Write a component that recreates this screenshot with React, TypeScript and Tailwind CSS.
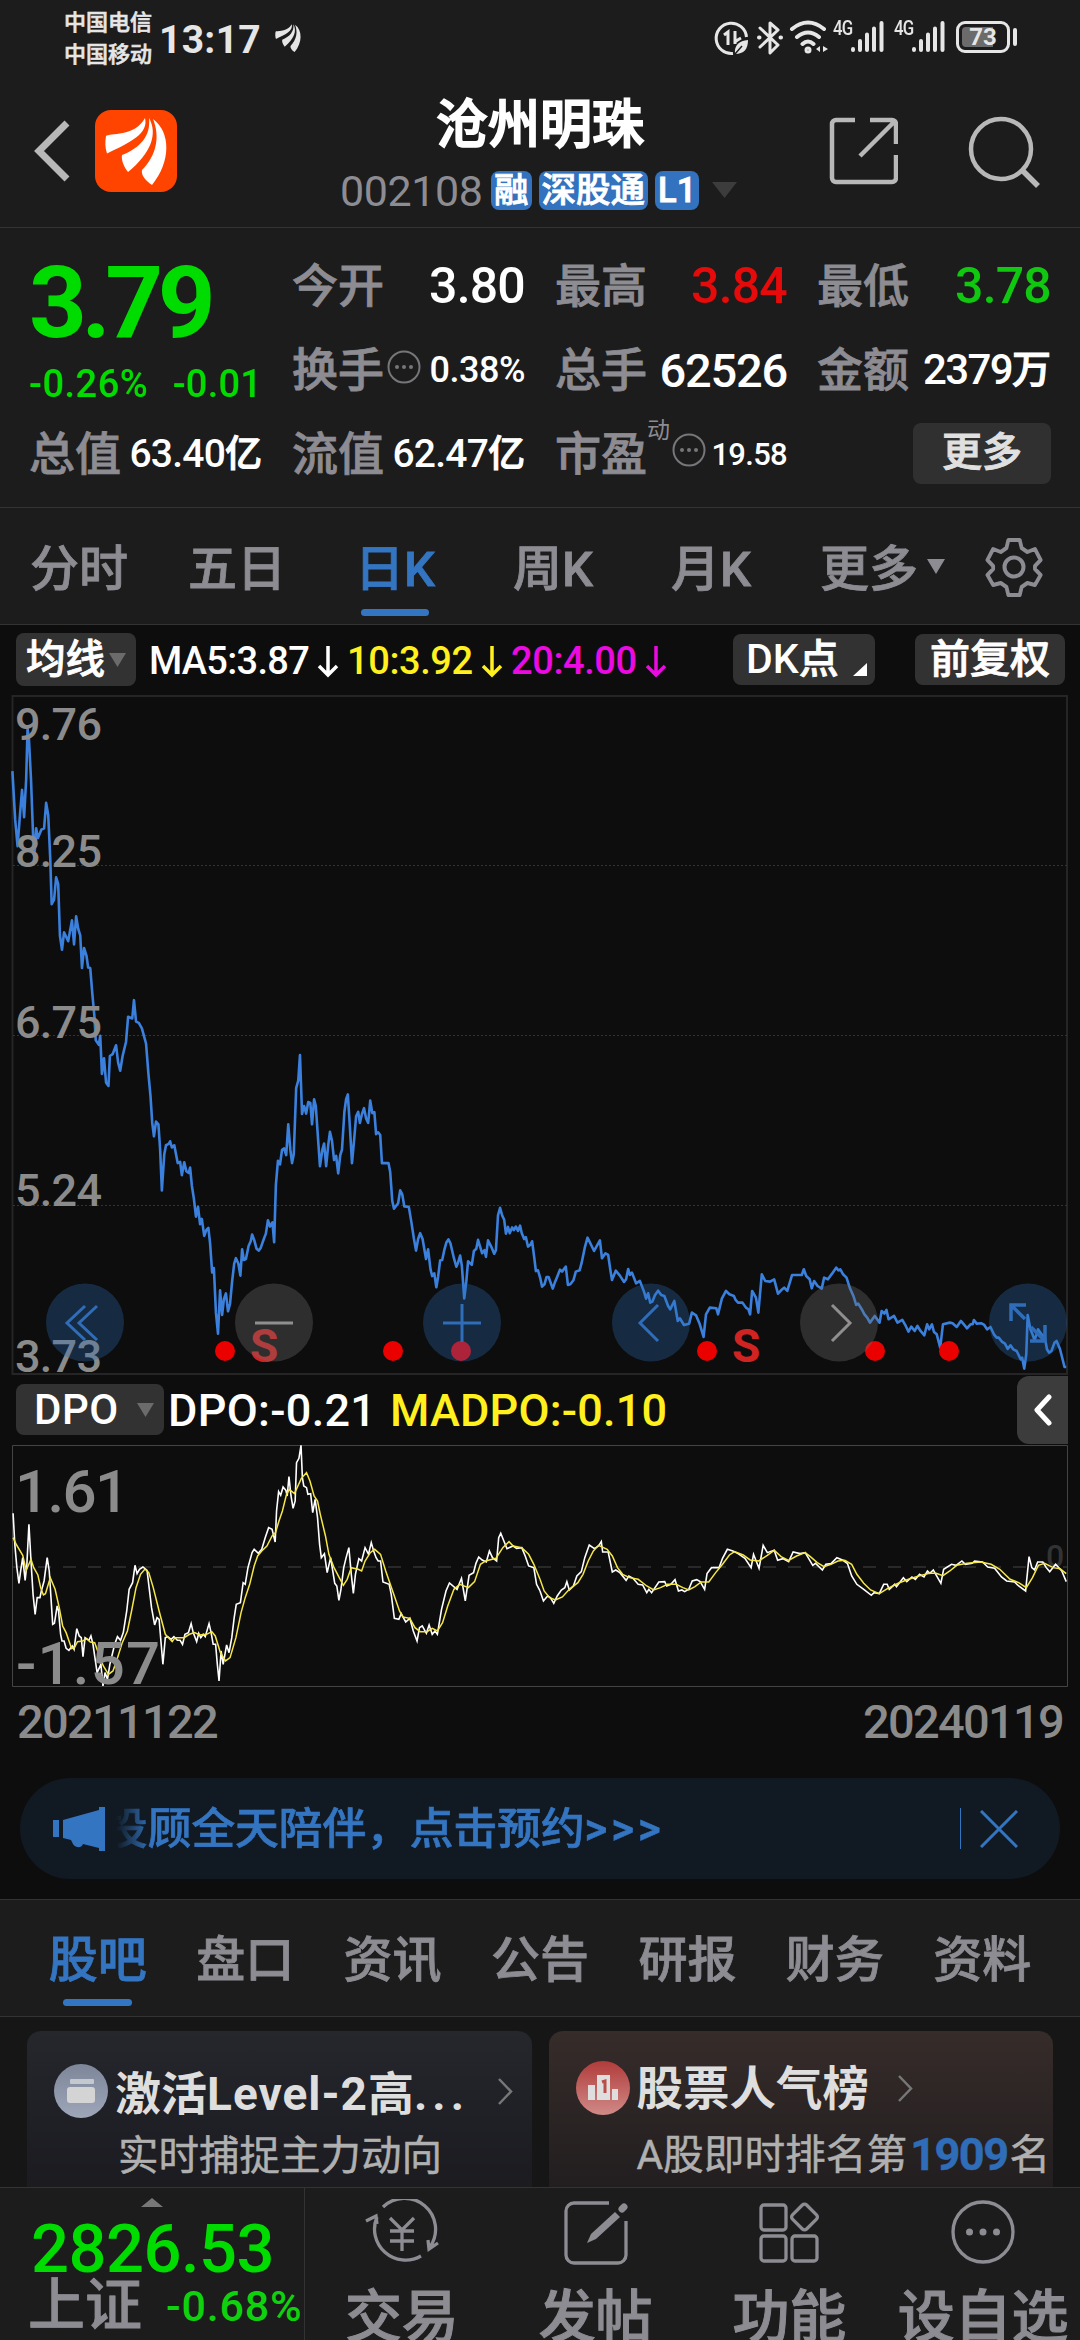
import { ReactNode } from 'react';

const PRICE_LEFT =
  '36,202 44,310 51,370 58,300 64,244 70,305 76,220 80,107 84,130 90,220 96,345 101,380 105,330 110,352 120,333 128,330 134,273 140,300 146,400 150,500 157,490 163,440 169,455 174,570 180,602 186,563 198,583 209,536 215,590 221,527 227,555 233,570 238,643 244,598 251,615 256,642 262,643 268,700 274,750 278,805 287,815 291,795 296,880 302,845 308,900 315,907 319,840 327,836 337,816 343,855 349,873 356,840 366,808 372,752 384,756 389,715 395,763 403,766 412,778 424,812 431,880 437,930 442,990 447,1020 453,987 460,993 465,1050 470,1141 477,1060 482,1040 490,1037 494,1031 499,1045 506,1040 516,1080 523,1077 528,1107 535,1078 541,1098 548,1102 552,1090 557,1130 563,1160 569,1200 575,1178 581,1217 586,1205 593,1243 599,1230 605,1225 610,1260 616,1325 621,1315 627,1415 633,1462 639,1365 645,1420 650,1385 656,1372 662,1412 668,1395 674,1345 680,1305 685,1293 692,1305 698,1332 703,1273 708,1297 714,1295 722,1265 728,1255 732,1240 738,1252 745,1272 751,1276 757,1270 766,1250 772,1238 778,1208 784,1222 791,1213 796,1257 801,1130 807,1075 813,1083 819,1050 825,1047 831,1062 837,993 843,1050 848,1080 853,1060 860,912 866,895 871,838 877,970 883,952 889,969 895,943 901,945 906,993 912,937 917,952 923,1020 929,1087 936,1050 941,1036 947,1087 953,1040 958,1010 964,1030 970,1073 976,1064 982,1103 988,1062 993,1050 1000,965 1005,937 1010,926 1016,1000 1022,1080 1028,1030 1034,975 1040,965 1045,990 1051,970 1057,957 1063,980 1069,990 1075,940 1081,968 1087,966 1092,1015 1098,1011 1104,1017 1109,1080 1128,1080 1133,1100 1139,1165 1144,1182 1156,1170 1162,1141 1168,1150 1174,1177 1187,1178 1194,1210 1202,1250 1208,1276 1214,1250 1220,1237 1227,1250 1237,1295 1243,1273 1250,1318 1255,1333 1261,1327 1267,1358 1272,1335 1278,1298 1284,1297 1290,1275 1296,1258 1302,1251 1308,1260 1318,1293 1325,1312 1330,1303 1336,1287 1341,1310 1348,1383 1354,1345 1359,1300 1370,1308 1376,1277 1383,1272 1388,1252 1400,1282 1407,1275 1411,1290 1417,1253 1428,1270 1435,1283 1440,1275 1446,1197 1452,1180 1458,1197 1464,1207 1469,1238 1475,1223 1480,1237 1487,1224 1492,1230 1498,1222 1504,1232 1510,1220 1515,1237 1522,1250 1527,1246 1533,1267 1540,1263 1545,1255 1551,1290 1556,1322 1562,1320 1568,1336';

const PRICE_RIGHT =
  '0,828 6,857 13,850 19,828 25,828 37,863 44,842 50,827 58,806 64,812 75,797 81,852 88,850 97,838 104,812 115,808 121,785 130,740 138,710 150,735 157,750 174,718 180,772 190,757 198,762 204,805 209,837 220,809 232,824 244,843 250,835 256,804 261,822 267,815 279,847 290,840 302,872 308,893 314,877 320,905 326,902 334,882 343,869 352,882 361,885 372,915 378,925 390,900 400,960 406,952 418,972 433,968 441,935 453,943 464,970 475,1008 482,940 493,920 512,922 517,940 528,893 540,870 550,880 563,885 568,897 575,905 588,905 598,920 605,925 610,940 616,870 627,890 634,935 644,820 654,840 668,842 680,835 691,878 700,868 709,860 718,870 732,822 760,822 766,805 773,825 783,835 789,862 796,840 806,855 818,863 825,830 836,835 848,818 860,800 866,808 872,805 880,820 890,830 900,862 910,885 918,912 924,908 936,928 942,940 950,950 958,965 972,945 986,965 992,930 1000,938 1006,927 1012,955 1028,945 1038,965 1052,957 1062,975 1070,992 1078,977 1088,990 1096,975 1105,990 1116,1003 1124,970 1130,985 1138,970 1144,993 1152,1000 1162,1040 1170,970 1190,965 1198,967 1210,978 1222,960 1232,972 1240,982 1250,970 1256,970 1260,957 1268,968 1282,967 1290,972 1298,985 1308,978 1318,1000 1326,1010 1332,1010 1342,1023 1350,1028 1358,1044 1366,1033 1374,1045 1384,1050 1396,1075 1400,1070 1406,1103 1412,1060 1416,942 1424,985 1430,1000 1436,1018 1446,985 1456,1000 1466,1010 1472,1045 1478,1055 1485,1050 1494,1025 1500,1020 1510,1045 1523,1098 1528,1098';

const DPO_LEFT =
  '38,427 43,520 49,590 55,637 60,600 66,560 73,628 78,580 84,460 90,570 96,670 102,730 108,680 116,680 120,660 128,630 137,560 143,600 148,680 153,760 158,757 166,705 170,720 176,790 180,810 186,810 192,832 200,838 210,825 215,835 223,773 230,795 236,800 241,857 247,800 258,808 264,795 270,820 282,905 293,880 299,945 305,905 312,925 319,880 326,850 333,820 341,797 350,808 358,785 368,720 375,655 385,635 392,583 398,608 405,595 415,588 427,598 433,650 440,710 449,762 456,740 462,745 468,820 473,880 480,800 487,797 497,805 505,797 515,808 523,808 530,820 537,790 547,785 555,758 561,785 571,812 577,787 583,800 590,790 596,797 607,758 613,785 619,820 626,820 631,880 636,930 642,840 648,880 658,822 665,845 673,800 680,740 686,700 698,695 706,635 712,640 720,590 732,545 738,535 750,547 760,535 770,500 780,470 790,475 799,513 803,420 809,362 815,373 822,348 830,358 834,375 839,317 845,375 851,412 857,390 861,275 868,262 874,223 878,320 882,345 890,350 894,370 902,368 908,425 915,385 922,440 928,520 933,560 942,548 950,605 960,560 972,637 978,645 984,688 990,655 998,590 1005,560 1013,530 1020,610 1026,667 1032,610 1042,563 1050,570 1060,530 1070,550 1078,515 1085,540 1092,560 1098,570 1105,570 1112,633 1130,640 1136,670 1145,742 1158,745 1165,728 1178,753 1190,742 1200,780 1211,810 1218,770 1226,765 1238,787 1246,762 1255,790 1263,780 1270,790 1282,715 1295,660 1305,636 1327,655 1340,622 1351,690 1362,613 1375,605 1382,577 1390,558 1400,567 1412,573 1421,540 1430,560 1442,570 1448,500 1454,487 1463,510 1472,533 1490,525 1500,532 1515,530 1525,555 1535,585 1550,590 1558,640 1568,660';

const DPO_RIGHT =
  '0,660 10,690 22,675 30,680 40,697 50,675 62,657 72,650 78,632 85,657 97,645 107,615 120,602 130,560 143,522 158,533 170,525 178,512 182,543 198,543 210,603 220,597 232,605 250,628 258,615 270,622 285,640 298,642 310,665 316,655 324,665 345,633 362,632 368,645 380,640 392,626 402,660 412,657 420,662 432,655 442,630 455,626 465,632 478,655 485,608 498,590 520,590 530,562 544,535 560,540 575,548 595,562 613,590 620,550 636,592 648,523 660,545 680,538 690,568 705,563 722,572 735,543 755,548 770,545 792,583 800,577 820,597 830,580 845,578 862,560 880,568 893,578 905,615 920,640 940,655 962,673 970,665 985,668 998,640 1008,640 1014,655 1030,640 1035,647 1055,620 1065,632 1080,618 1090,625 1102,610 1115,618 1125,600 1132,607 1142,597 1150,612 1164,637 1172,595 1195,580 1208,583 1225,570 1235,580 1255,577 1262,570 1285,573 1300,588 1320,592 1340,618 1355,630 1378,633 1390,645 1410,660 1420,557 1428,590 1436,597 1445,573 1460,573 1470,590 1480,602 1497,580 1515,600 1528,632';

const MADPO_LEFT =
  '38,500 48,522 66,553 76,598 90,565 98,590 110,612 118,650 126,672 132,668 146,620 160,655 172,710 182,765 192,785 208,833 216,830 225,812 240,810 252,803 262,813 275,815 287,850 300,885 315,910 328,900 340,865 355,815 370,780 382,720 395,650 408,610 421,594 432,605 445,650 462,720 480,790 500,812 508,800 535,800 550,790 565,785 580,792 600,790 615,782 625,795 640,845 655,870 668,860 685,800 700,725 712,680 725,640 738,585 748,555 760,540 775,525 790,495 800,485 810,450 820,420 832,370 840,355 855,368 875,322 890,305 900,330 912,375 922,390 930,430 945,495 955,550 970,590 985,620 997,643 1008,625 1020,590 1040,595 1050,600 1060,570 1075,545 1088,535 1105,550 1120,600 1140,660 1160,720 1170,738 1190,742 1205,770 1220,782 1240,782 1255,772 1270,780 1285,755 1300,705 1318,655 1335,640 1360,650 1378,632 1395,580 1410,570 1440,562 1460,530 1478,512 1490,525 1515,530 1535,550 1550,580 1568,625';

const MADPO_RIGHT =
  '0,625 12,660 28,680 45,687 65,678 85,655 110,635 125,610 140,570 155,540 170,523 195,535 210,555 225,590 240,610 260,620 285,625 310,645 330,657 350,650 370,640 395,640 415,650 432,657 450,647 468,633 490,633 510,605 530,580 550,552 565,542 590,552 610,567 635,570 660,553 680,538 700,557 722,568 745,555 770,545 785,557 805,575 825,587 845,580 865,570 885,568 905,580 920,610 940,637 960,657 985,668 1010,652 1040,637 1070,625 1100,615 1130,607 1150,607 1170,614 1190,600 1210,583 1240,577 1280,573 1310,580 1335,595 1365,625 1390,635 1412,650 1430,620 1447,583 1465,577 1490,590 1510,593 1528,608';

const priceLabels = [
  { text: '9.76', y: 739 },
  { text: '8.25', y: 866 },
  { text: '6.75', y: 1037 },
  { text: '5.24', y: 1205 },
  { text: '3.73', y: 1371 },
];

const periods = ['分时', '五日', '日K', '周K', '月K'];
const sections = ['股吧', '盘口', '资讯', '公告', '研报', '财务', '资料'];

const Leaf = ({ className }: { className: string }) => (
  <svg className={className} viewBox="0 0 82 82" fill="currentColor">
    <path d="M11 26C14 23 40 27 50 8C54 24 34 33 12 43.500C10 38 10 32 11 26Z" />
    <path d="M27 45C45 38 56 26 54 8C63 24 56 43 33 62C29 57 26 50 27 45Z" />
    <path d="M47 60C62 45 65 26 58 9C76 22 76 52 57 75C50 70 46 65 47 60Z" />
  </svg>
);

const Signal = () => (
  <div className="flex items-start">
    <span className="text-[21px] leading-[15px] font-medium tracking-[-1px] mt-px w-[18px] scale-x-80 origin-left">4G</span>
    <svg className="w-[34px] h-[33px] -ml-px" viewBox="0 0 34 33" stroke="currentColor" strokeWidth="4" strokeLinecap="round">
      <path d="M3 30v-1M10 30v-9M17 30V14.500M24 30V8.500M31.500 30V3" />
    </svg>
  </div>
);

const StatusBar = () => (
  <div className="h-[75px] flex items-start justify-between pl-16 pr-[63px] text-[#e6e6e6]">
    <div className="flex items-center h-[76px]">
      <div className="text-[22px] leading-8 font-medium w-[91px] mt-0.5 [-webkit-text-stroke:0.6px_currentColor]">
        <div>中国电信</div>
        <div>中国移动</div>
      </div>
      <span className="text-[39px] leading-none font-bold w-[110px] mt-1 ml-1 tracking-[0.3px]">13:17</span>
      <Leaf className="w-[34px] h-[34px] ml-0.5" />
    </div>
    <div className="flex items-start pt-5">
      <svg className="w-9 h-9 mr-[7px]" viewBox="0 0 36 36" fill="none" stroke="currentColor" strokeWidth="3">
        <path d="M19 33.500A15.200 15.200 0 1 1 32.500 17" />
        <path d="M10 15l4-3v13M21 11v13M21 22c2-2 4-3 6-4" />
        <path d="M21 34c-1-9 4-13 13-14c0 9-4 14-13 14Z" fill="currentColor" stroke="none" />
        <path d="M21 34l7-8" stroke="#1c1c1c" strokeWidth="1.500" />
      </svg>
      <svg className="w-[26px] h-9 mr-1.5" viewBox="0 0 26 36" fill="none" stroke="currentColor" strokeWidth="3" strokeLinejoin="round" strokeLinecap="round">
        <path d="M3 8l18 17-8 8V3l8 7L3 27" />
        <path d="M2 17.500h.5M23.500 17.500h.5" strokeWidth="4" />
      </svg>
      <svg className="w-10 h-9 mr-1" viewBox="0 0 40 36" fill="none" stroke="currentColor" strokeWidth="4" strokeLinecap="round">
        <path d="M3 9Q19-4 35 9M8 17Q19 8 30 17M13.500 24Q19 19 24.500 24" />
        <circle cx="19" cy="30" r="1.500" />
        <path d="M31 26v6l-4-3zM34 26v6l5-3z" fill="currentColor" strokeWidth="0" />
      </svg>
      <Signal />
      <div className="w-2.5" />
      <Signal />
      <div className="ml-[11px] mt-px w-[54px] h-8 rounded-[9px] border-[3px] border-[#e6e6e6] p-[3px]">
        <div className="h-full rounded-[4px] bg-[linear-gradient(90deg,#6b6b6b_73%,transparent_73%)] flex items-center justify-center text-[24px] leading-none font-bold">73</div>
      </div>
      <div className="mt-2 ml-[3px] w-1 h-[18px] rounded-full bg-[#e6e6e6]" />
    </div>
  </div>
);

const Tag = ({ children }: { children: ReactNode }) => (
  <span className="h-[39px] px-[3px] rounded-[8px] bg-[#3272be] text-white text-[34.500px] leading-[38px] font-medium [-webkit-text-stroke:0.8px_currentColor]">{children}</span>
);

const Header = () => (
  <div className="h-[153px] flex border-b border-[#333] relative">
    <svg className="w-9 h-[62px] mt-[45px] ml-[34px]" viewBox="0 0 36 62" fill="none" stroke="#b8b8b8" strokeWidth="7">
      <path d="M33 3L5 31l28 28" />
    </svg>
    <div className="ml-[25px] mt-[35px] w-[82px] h-[82px] rounded-[16px] bg-[#ff4400] text-white">
      <Leaf className="w-[82px] h-[82px]" />
    </div>
    <div className="absolute left-[340px] top-0 w-[400px] flex flex-col items-center">
      <h1 className="text-[52px] leading-[60px] mt-[21px] text-white font-medium [-webkit-text-stroke:1.8px_currentColor]">沧州明珠</h1>
      <div className="flex items-center gap-[7px] mt-[13px] self-start">
        <span className="w-[144px] text-[43px] leading-[39px] text-[#8d8c92] tracking-[-0.4px] mt-[3px]">002108</span>
        <Tag>融</Tag>
        <Tag>深股通</Tag>
        <Tag>L1</Tag>
        <svg className="w-[25px] h-4 ml-1.5" viewBox="0 0 25 16"><path d="M0 0h25L12.500 16z" fill="#3c3c3c" /></svg>
      </div>
    </div>
    <div className="ml-auto flex pt-[41px] pr-[40px] gap-[70px]">
      <svg className="w-[70px] h-[70px]" viewBox="0 0 70 70" fill="none" stroke="#b8b8b8" strokeWidth="4.500">
        <path d="M27 4H8a4 4 0 0 0-4 4v54a4 4 0 0 0 4 4h56a4 4 0 0 0 4-4V39M42 4h22a4 4 0 0 1 4 4v20M67 5L32 40" />
      </svg>
      <svg className="w-[72px] h-[72px]" viewBox="0 0 72 72" fill="none" stroke="#b8b8b8" strokeWidth="4.500">
        <circle cx="33" cy="33" r="30" />
        <path d="M54 54l16 16" strokeWidth="5.500" />
      </svg>
    </div>
  </div>
);

const Dots = () => (
  <svg className="w-[34px] h-[34px] shrink-0" viewBox="0 0 34 34" fill="#77767b">
    <circle cx="17" cy="17" r="15.500" fill="none" stroke="#77767b" strokeWidth="2" />
    <circle cx="10" cy="17" r="2" /><circle cx="17" cy="17" r="2" /><circle cx="24" cy="17" r="2" />
  </svg>
);

const Stat = ({ label, mark, children }: { label: string; mark?: ReactNode; children: ReactNode }) => (
  <div className="h-[84px] flex items-center">
    <span className="text-[46px] leading-none text-[#8d8c92] font-medium whitespace-nowrap mt-0.5 [-webkit-text-stroke:0.8px_currentColor]">{label}</span>
    {mark}
    <span className="ml-auto mt-0.5 flex items-center text-white font-medium whitespace-nowrap leading-none">{children}</span>
  </div>
);

const Quote = () => (
  <div className="h-[280px] border-b border-[#333] px-[29px] pt-[15px] grid grid-cols-[233px_233px_232px_234px] gap-x-[30px] content-start">
    <div className="row-span-2 h-[168px] text-[#00dc00]">
      <div className="text-[101px] leading-[84px] pt-[18px] font-bold tracking-[-5.500px]">3.79</div>
      <div className="flex justify-between text-[38px] leading-10 mt-[19px] font-medium">
        <span className="tracking-[0.5px]">-0.26%</span>
        <span className="tracking-[0.2px]">-0.01</span>
      </div>
    </div>
    <Stat label="今开"><span className="text-[50px] tracking-[-0.8px]">3.80</span></Stat>
    <Stat label="最高"><span className="text-[50px] tracking-[-0.8px] text-[#e60a0a]">3.84</span></Stat>
    <Stat label="最低"><span className="text-[50px] tracking-[-0.8px] text-[#0fc80f]">3.78</span></Stat>
    <Stat label="换手" mark={<span className="ml-[3px] -mt-1"><Dots /></span>}><span className="text-[36px] tracking-[-0.5px]">0.38%</span></Stat>
    <Stat label="总手"><span className="text-[47px] tracking-[-1.2px]">62526</span></Stat>
    <Stat label="金额"><span className="text-[42px] tracking-[-1.6px]">2379</span><span className="text-[39px] [-webkit-text-stroke:1px_currentColor]">万</span></Stat>
    <Stat label="总值"><span className="text-[39px] tracking-[-0.8px]">63.40</span><span className="text-[37px] [-webkit-text-stroke:1px_currentColor]">亿</span></Stat>
    <Stat label="流值"><span className="text-[39px] tracking-[-0.8px]">62.47</span><span className="text-[37px] [-webkit-text-stroke:1px_currentColor]">亿</span></Stat>
    <Stat
      label="市盈"
      mark={
        <>
          <span className="text-[23px] leading-none text-[#8d8c92] self-start mt-2">动</span>
          <span className="-mt-1.5 ml-0.5"><Dots /></span>
        </>
      }
    >
      <span className="text-[31px] tracking-[-0.7px]">19.58</span>
    </Stat>
    <div className="h-[84px] flex items-center justify-end">
      <button className="w-[138px] h-[61px] rounded-[8px] bg-[#303030] text-[#e0e0e0] text-[40px] leading-none font-medium [-webkit-text-stroke:1px_currentColor]">更多</button>
    </div>
  </div>
);

const Periods = () => (
  <div className="h-[117px] border-b border-[#333] flex text-[49px] text-[#8d8c92] font-medium [-webkit-text-stroke:0.8px_currentColor]">
    {periods.map((p) => (
      <div key={p} className={p === '日K' ? 'w-[158px] text-[#3475c2] flex flex-col items-center' : 'w-[158px] flex flex-col items-center'}>
        <span className="leading-[60px] mt-[32px]">{p}</span>
        {p === '日K' && <i className="w-[68px] h-[7px] rounded-full bg-[#3475c2] mt-[9px]" />}
      </div>
    ))}
    <span className="leading-[60px] mt-[32px] ml-[30px]">更多</span>
    <svg className="w-[18px] h-[15px] ml-[9px] mt-[51px]" viewBox="0 0 18 15"><path d="M0 0h18L9 15z" fill="#8d8c92" /></svg>
    <svg className="w-[58px] h-[60px] ml-[40px] mt-[29px]" viewBox="0 0 58 60" fill="none" stroke="#8d8c92" strokeWidth="4" strokeLinejoin="round">
      <path d="M23 3h12l2 8 6 4 8-3 6 11-6 6v3l6 6-6 10-8-2-6 4-2 8H23l-2-8-6-4-8 2-6-10 6-6v-3l-6-6 6-11 8 3 6-4z" transform="translate(1.500 0) scale(.95 1)" />
      <circle cx="29" cy="30" r="9.500" />
    </svg>
  </div>
);

const Down = ({ color }: { color: string }) => (
  <svg className="w-[22px] h-8 mx-[8.500px] mt-0.5 shrink-0" viewBox="0 0 22 32" fill="none" stroke={color} strokeWidth="3.500">
    <path d="M11 0v29M2 20l9 9 9-9" />
  </svg>
);

const MaRow = () => (
  <div className="h-[66px] pt-2 pl-4 pr-[15px] flex items-start text-white font-medium whitespace-nowrap">
    <div className="w-[120px] h-[53px] rounded-[8px] bg-[#323232] flex items-center pl-2.5 text-[39.500px] leading-none [-webkit-text-stroke:0.8px_currentColor]">
      均线
      <svg className="w-[17px] h-[14px] ml-1" viewBox="0 0 17 14"><path d="M0 0h17L8.500 14z" fill="#6b6b6b" /></svg>
    </div>
    <div className="flex items-center h-[56px] ml-[13px] text-[38px] leading-none">
      <span className="w-[159px] tracking-[-0.7px]">MA5:3.87</span>
      <Down color="#fff" />
      <span className="w-[125px] text-[#fff01e] tracking-[-0.4px]">10:3.92</span>
      <Down color="#fff01e" />
      <span className="w-[125px] text-[#eb0ae1] tracking-[-0.4px]">20:4.00</span>
      <Down color="#eb0ae1" />
    </div>
    <div className="ml-auto mt-px w-[142px] h-[51px] rounded-[8px] bg-[#323232] flex items-center pl-[13px] text-[41px] leading-none">
      DK<span className="text-[40px] [-webkit-text-stroke:0.8px_currentColor]">点</span>
      <svg className="w-[14px] h-[13px] ml-auto mr-2 mt-5" viewBox="0 0 14 13"><path d="M14 0v13H0z" fill="#fff" /></svg>
    </div>
    <div className="ml-[40px] mt-px w-[150px] h-[51px] rounded-[8px] bg-[#323232] flex items-center justify-center text-[40px] leading-none [-webkit-text-stroke:0.8px_currentColor]">前复权</div>
  </div>
);

const PriceChart = () => (
  <svg className="block w-[1080px] h-[684px] shrink-0" viewBox="0 690 1080 684" fill="none">
    <path d="M12.500 1373V695H1067V1373Z" stroke="#252525" strokeWidth="2" />
    <path d="M13 864.500H1067M13 1034.500H1067M13 1204.500H1067" stroke="#333" strokeDasharray="2 2" />
    <g stroke="#3a80dc" strokeWidth="2.600" strokeLinejoin="round">
      <polyline points={PRICE_LEFT} transform="translate(0 680) scale(.3444 .4464)" vectorEffect="non-scaling-stroke" />
      <polyline points={PRICE_RIGHT} transform="translate(540 1000) scale(.3444 .3333)" vectorEffect="non-scaling-stroke" />
    </g>
    <g fill="#8b8b8b" fontSize="45" fontWeight="500">
      {priceLabels.map((l) => (
        <text key={l.text} x="15" y={l.y} textLength="87">{l.text}</text>
      ))}
    </g>
    <g fill="#eb0000">
      {[225, 393, 461, 707, 875, 949].map((x) => <circle key={x} cx={x} cy="1350" r="10" />)}
    </g>
    <g fill="#d22323" fontSize="46" fontWeight="700">
      <text x="250" y="1361">S</text>
      <text x="732" y="1361">S</text>
    </g>
    <g fill="#2c6cb4" fillOpacity=".32">
      {[85, 462, 651, 1028].map((x) => <circle key={x} cx={x} cy="1321.500" r="39" />)}
    </g>
    <g fill="#6e6e6e" fillOpacity=".34">
      {[274, 839].map((x) => <circle key={x} cx={x} cy="1321.500" r="39" />)}
    </g>
    <g stroke="#2f6db8" strokeWidth="3">
      <path d="M85 1305L67 1322L85 1339M97 1305L79 1322L97 1339" />
      <path d="M443 1322H481M462 1303V1341" />
      <path d="M658 1304L640 1322L658 1340" />
      <path d="M1011 1320V1304H1026M1011 1304L1025 1318M1045 1324V1340H1030M1045 1340L1031 1326" strokeWidth="3.500" />
    </g>
    <path d="M255 1322H293M832 1304L850 1322L832 1340" stroke="#8f8f8f" strokeWidth="3" />
  </svg>
);

const DpoRow = () => (
  <div className="h-[70px] pl-4 pr-3 flex items-start text-white font-medium whitespace-nowrap">
    <div className="w-[148px] h-[51px] mt-[9px] rounded-[8px] bg-[#323232] flex items-center pl-[18px] text-[42px] leading-none tracking-[0.5px]">
      DPO
      <svg className="w-[17px] h-[14px] ml-auto mr-2.5" viewBox="0 0 17 14"><path d="M0 0h17L8.500 14z" fill="#6b6b6b" /></svg>
    </div>
    <span className="w-[222px] ml-1 text-[45px] leading-[71px] tracking-[0.3px]">DPO:-0.21</span>
    <span className="text-[45px] leading-[71px] tracking-[0.2px] text-[#fff01e]">MADPO:-0.10</span>
    <div className="ml-auto mt-px w-[51px] h-[68px] rounded-l-[12px] bg-[#3c3c3c] flex items-center justify-center">
      <svg className="w-5 h-8" viewBox="0 0 20 32" fill="none" stroke="#fff" strokeWidth="5" strokeLinecap="round" strokeLinejoin="round"><path d="M16 3L4 16l12 13" /></svg>
    </div>
  </div>
);

const DpoChart = () => (
  <svg className="block w-[1080px] h-[244px] shrink-0" viewBox="0 1444 1080 244" fill="none">
    <path d="M12.500 1685.500V1444.500H1067.500V1685.500Z" stroke="#444" />
    <path d="M13 1566H1067" stroke="#333" strokeWidth="1.500" strokeDasharray="13 12" />
    <text x="1046" y="1566" fontSize="32" fontWeight="500" fill="#333">0</text>
    <g strokeWidth="1.600" stroke="#fff">
      <polyline points={DPO_LEFT} transform="translate(0 1370) scale(.3444 .3333)" vectorEffect="non-scaling-stroke" />
      <polyline points={DPO_RIGHT} transform="translate(540 1370) scale(.3444 .3333)" vectorEffect="non-scaling-stroke" />
    </g>
    <g strokeWidth="1.500" stroke="#f5e646">
      <polyline points={MADPO_LEFT} transform="translate(0 1370) scale(.3444 .3333)" vectorEffect="non-scaling-stroke" />
      <polyline points={MADPO_RIGHT} transform="translate(540 1370) scale(.3444 .3333)" vectorEffect="non-scaling-stroke" />
    </g>
    <g fill="#8b8b8b" fontSize="60" fontWeight="500">
      <text x="15" y="1511" textLength="114">1.61</text>
      <text x="16" y="1683" textLength="144">-1.57</text>
    </g>
  </svg>
);

const Banner = () => (
  <div className="mx-5 mt-[29px] h-[101px] rounded-full bg-[#111a23] flex items-center text-[#3475c2] shrink-0">
    <svg className="w-[53px] h-11 ml-[33px]" viewBox="0 0 53 44" fill="currentColor">
      <path d="M0 13h6v17H0zM10 13L46 3V0h6v44h-6v-3L30 37c-2 5-9 4-11-2l-1-2-8-2z" />
    </svg>
    <div className="ml-[-2px] w-[600px] overflow-hidden text-[43.700px] leading-[60px] font-medium whitespace-nowrap [-webkit-text-stroke:0.7px_currentColor] [mask-image:linear-gradient(90deg,transparent_12px,#000_48px)]">
      投顾全天陪伴，点击预约<span className="tracking-[4px]">&gt;&gt;&gt;</span>
    </div>
    <i className="ml-auto w-px h-[41px] bg-[#3475c2]" />
    <svg className="w-[38px] h-[38px] ml-[19px] mr-[42px]" viewBox="0 0 38 38" stroke="currentColor" strokeWidth="3"><path d="M1 1l36 36M37 1L1 37" /></svg>
  </div>
);

const Sections = () => (
  <div className="mt-5 h-[118px] border-y border-[#333] bg-[#1c1c1c] px-6 flex shrink-0 text-[49px] text-[#8d8c92] font-medium [-webkit-text-stroke:0.8px_currentColor]">
    {sections.map((s) => (
      <div key={s} className={s === '股吧' ? 'flex-1 flex flex-col items-center text-[#3475c2]' : 'flex-1 flex flex-col items-center'}>
        <span className="leading-[60px] mt-[31px]">{s}</span>
        {s === '股吧' && <i className="w-[69px] h-[7px] rounded-full bg-[#3475c2] mt-[8px]" />}
      </div>
    ))}
  </div>
);

const Chevron = () => (
  <svg className="w-[15px] h-[27px]" viewBox="0 0 15 27" fill="none" stroke="#777" strokeWidth="2.500"><path d="M1 1l12 12.500L1 26" /></svg>
);

const Cards = () => (
  <div className="flex-1 min-h-0 bg-[#161616] pt-3.5 px-[27px] flex gap-[17px] whitespace-nowrap">
    <div className="flex-1 rounded-t-[14px] bg-gradient-to-b from-[#25272d] to-[#1b1b20] pl-[27px] pt-[30px]">
      <div className="flex items-center">
        <svg className="w-[54px] h-[54px]" viewBox="0 0 54 54">
          <defs><linearGradient id="a" x2="0" y2="1"><stop stopColor="#7d8799" /><stop offset="1" stopColor="#9ea6ba" /></linearGradient></defs>
          <circle cx="27" cy="27" r="27" fill="url(#a)" />
          <rect x="16" y="15" width="24" height="5" rx="1" fill="#c4c8cf" />
          <rect x="13" y="23" width="28" height="16" rx="3" fill="#d4d4d4" />
        </svg>
        <span className="ml-[7px] mt-1.5 w-[365px] text-[46px] leading-[54px] text-[#dedede] font-bold">激活<span className="tracking-[1px]">Level-2</span>高<span className="tracking-[5px]">...</span></span>
        <span className="ml-[18px]"><Chevron /></span>
      </div>
      <div className="ml-[64px] mt-[10px] text-[40.500px] leading-[50px] text-[#b0b0b0] [-webkit-text-stroke:0.5px_currentColor]">实时捕捉主力动向</div>
    </div>
    <div className="flex-1 rounded-t-[14px] bg-gradient-to-b from-[#362c2a] to-[#221e1f] pl-[27px] pt-[30px]">
      <div className="flex items-center">
        <svg className="w-[54px] h-[54px]" viewBox="0 0 54 54">
          <defs><linearGradient id="b" x2="0" y2="1"><stop stopColor="#b03c3a" /><stop offset="1" stopColor="#d08a88" /></linearGradient></defs>
          <circle cx="27" cy="27" r="27" fill="url(#b)" />
          <path d="M12 24h7v15h-7zM21 14h13v25H21zM36 28h6v11h-6z" fill="#dedede" />
          <path d="M26 21l3-1v12" fill="none" stroke="#b84d4b" strokeWidth="3" />
        </svg>
        <span className="ml-[7px] mt-0.5 w-[237px] text-[46.500px] leading-[50px] text-[#dedede] font-bold">股票人气榜</span>
        <span className="ml-[24px]"><Chevron /></span>
      </div>
      <div className="ml-[61px] mt-[15px] flex items-center text-[40.700px] leading-[50px] text-[#b0b0b0] [-webkit-text-stroke:0.5px_currentColor]">
        A股即时排名第<b className="text-[45px] text-[#2f6db8] tracking-[-1.500px] pl-[3px] pr-0.5">1909</b><span className="w-[38px]">名</span>
      </div>
    </div>
  </div>
);

const NavItem = ({ label, children }: { label: string; children: ReactNode }) => (
  <div className="flex-1 flex flex-col items-center">
    <svg className="w-[74px] h-[66px] mt-[11px] shrink-0" viewBox="0 0 74 66" fill="none" stroke="#8d8c92" strokeWidth="3.300">{children}</svg>
    <span className="text-[57px] leading-[70px] mt-[18px] text-[#8d8c92] font-medium whitespace-nowrap [-webkit-text-stroke:1px_currentColor]">{label}</span>
  </div>
);

const BottomBar = () => (
  <div className="h-[153px] border-t border-[#333] flex shrink-0 overflow-hidden bg-[#1c1c1c]">
    <div className="w-[305px] border-r border-[#333] pl-[28px] flex flex-col">
      <svg className="w-[22px] h-[9px] mt-2.5 ml-[113px] shrink-0" viewBox="0 0 22 9"><path d="M0 9h22L11 0z" fill="#777" /></svg>
      <span className="text-[67px] leading-[60px] mt-[12px] ml-[3px] text-[#00dc00] font-medium tracking-[-0.6px]">2826.53</span>
      <div className="flex items-center whitespace-nowrap -mt-[3px]">
        <span className="text-[57px] leading-[60px] text-[#8d8c92] font-medium [-webkit-text-stroke:0.8px_currentColor]">上证</span>
        <span className="text-[43px] leading-none ml-6 text-[#0fd20f] tracking-[0.8px] font-medium">-0.68%</span>
      </div>
    </div>
    <NavItem label="交易">
      <path d="M18 8A31 31 0 0 1 65 48M56 57A31 31 0 0 1 12 18M1 22l10-5 1 8M73 44l-9 6-1-9" />
      <path d="M25 19l12 12 12-12M25 32h24M25 42h24M37 31v21" />
    </NavItem>
    <NavItem label="发帖">
      <path d="M50 4H15a8 8 0 0 0-8 8v44a8 8 0 0 0 8 8h44a8 8 0 0 0 8-8V22" />
      <path d="M28 44l4-9 24-22 5 5-24 22z" fill="#8d8c92" stroke="none" />
      <path d="M63 10l2-2" strokeWidth="7" strokeLinecap="round" />
    </NavItem>
    <NavItem label="功能">
      <rect x="9" y="6" width="25" height="25" rx="3" />
      <rect x="9" y="37" width="25" height="25" rx="3" />
      <rect x="40" y="37" width="25" height="25" rx="3" />
      <rect x="42.500" y="8" width="20" height="20" rx="3" transform="rotate(45 52.500 18)" />
    </NavItem>
    <NavItem label="设自选">
      <circle cx="37" cy="33" r="30" />
      <g fill="#8d8c92" stroke="none"><circle cx="23.500" cy="33" r="3.500" /><circle cx="37" cy="33" r="3.500" /><circle cx="50.500" cy="33" r="3.500" /></g>
    </NavItem>
  </div>
);

const App = () => {
  return (
    <div className="w-[1080px] h-[2340px] overflow-hidden flex flex-col bg-[#0d0d0d] font-['Roboto','Noto_Sans_CJK_SC',sans-serif]">
      <div className="bg-[#1c1c1c] shrink-0">
        <StatusBar />
        <Header />
        <Quote />
        <Periods />
      </div>
      <MaRow />
      <PriceChart />
      <DpoRow />
      <DpoChart />
      <div className="h-[60px] px-[17px] flex justify-between text-[47px] leading-[66px] tracking-[-1.700px] text-[#8b8b8b] font-medium shrink-0">
        <span>20211122</span>
        <span>20240119</span>
      </div>
      <Banner />
      <Sections />
      <Cards />
      <BottomBar />
    </div>
  );
};

export default App;
